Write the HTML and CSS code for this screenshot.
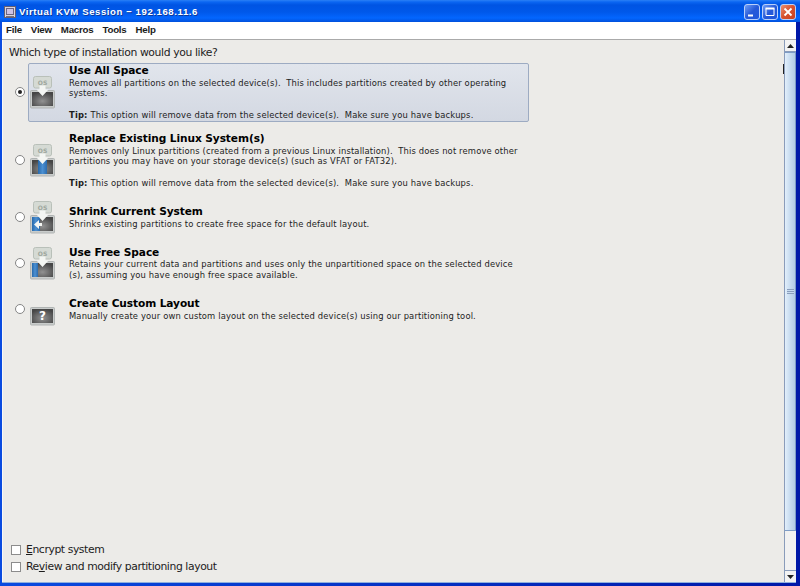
FILE: index.html
```html
<!DOCTYPE html>
<html lang="en">

<head>
    <meta charset="utf-8">
    <title>Virtual KVM Session - 192.168.11.6</title>
    <link rel="stylesheet" href="styles.css">
</head>

<body>
    <!-- shared icon pieces -->
    <svg class="defs" width="0" height="0">
        <defs>
            <radialGradient id="metal" cx="50%" cy="65%" r="65%">
                <stop offset="0" stop-color="#929292" />
                <stop offset="1" stop-color="#464646" />
            </radialGradient>
            <linearGradient id="blue" x1="0" y1="0" x2="1" y2="0">
                <stop offset="0" stop-color="#2769ab" />
                <stop offset="0.5" stop-color="#4c90d2" />
                <stop offset="1" stop-color="#2c6cae" />
            </linearGradient>
            <g id="disk">
                <rect x="0.5" y="14.5" width="24" height="17.5" rx="1" fill="#c9cccb" stroke="#b0b4b3" />
                <rect x="2" y="16" width="21" height="14" fill="url(#metal)" />
            </g>
            <g id="os">
                <rect x="3.5" y="0.5" width="18" height="11.5" rx="2" fill="#d5dad4" stroke="#b9c0b9" />
                <path d="M9.5 9.500h6v4h3l-6 6.500l-6-6.500h3z" fill="#f4f6f3" />
                <text x="12.5" y="8.5" class="os-text">OS</text>
            </g>
        </defs>
    </svg>

    <div class="window">
        <div class="titlebar">
            <svg class="app-icon" width="12" height="12" viewBox="0 0 12 12">
                <rect x="0.5" y="0.5" width="11" height="11" fill="#d9d5dc" stroke="#655f72" />
                <rect x="2.5" y="2.5" width="7" height="6" fill="#cbc3e6" stroke="#6d6684" />
                <path d="M2 10.500h8" stroke="#77717e" />
            </svg>
            <span class="title">Virtual KVM Session − 192.168.11.6</span>
            <div class="buttons">
                <span class="win-btn"><svg width="16" height="16"><path d="M4 11.500h5" stroke="#fff" stroke-width="2" /></svg></span>
                <span class="win-btn"><svg width="16" height="16"><path d="M4 4.500h8v7h-8z" fill="none" stroke="#fff" /><path d="M3.500 4.500h9" stroke="#fff" stroke-width="2" /></svg></span>
                <span class="win-btn close"><svg width="16" height="16"><path d="M4.500 4.500l7 7M11.500 4.500l-7 7" stroke="#fff" stroke-width="1.800" /></svg></span>
            </div>
        </div>

        <div class="menubar">
            <span>File</span>
            <span>View</span>
            <span>Macros</span>
            <span>Tools</span>
            <span>Help</span>
        </div>

        <div class="main">
            <div class="screen">
                <p class="question">Which type of installation would you like?</p>

                <div class="options">
                    <div class="option tall">
                        <span class="radio checked"></span>
                        <div class="card selected">
                            <svg class="icon" width="25" height="33"><use href="#disk" /><use href="#os" /></svg>
                            <div class="text">
                                <h2>Use All Space</h2>
                                <p>Removes all partitions on the selected device(s).&nbsp; This includes partitions created by other operating<br>systems.</p>
                                <p class="tip"><b>Tip:</b> This option will remove data from the selected device(s).&nbsp; Make sure you have backups.</p>
                            </div>
                        </div>
                    </div>
                    <div class="option tall">
                        <span class="radio"></span>
                        <div class="card">
                            <svg class="icon" width="25" height="33"><use href="#disk" /><rect x="8" y="16" width="9" height="14" fill="url(#blue)" /><use href="#os" /></svg>
                            <div class="text">
                                <h2>Replace Existing Linux System(s)</h2>
                                <p>Removes only Linux partitions (created from a previous Linux installation).&nbsp; This does not remove other<br>partitions you may have on your storage device(s) (such as VFAT or FAT32).</p>
                                <p class="tip"><b>Tip:</b> This option will remove data from the selected device(s).&nbsp; Make sure you have backups.</p>
                            </div>
                        </div>
                    </div>
                    <div class="option">
                        <span class="radio"></span>
                        <div class="card">
                            <svg class="icon" width="25" height="33"><use href="#disk" /><rect x="2" y="16" width="8" height="14" fill="url(#blue)" /><use href="#os" /><path d="M4 23.500l5-4.500v3h3v3h-3v3z" fill="#f4f6f3" /></svg>
                            <div class="text">
                                <h2>Shrink Current System</h2>
                                <p>Shrinks existing partitions to create free space for the default layout.</p>
                            </div>
                        </div>
                    </div>
                    <div class="option">
                        <span class="radio"></span>
                        <div class="card">
                            <svg class="icon" width="25" height="33"><use href="#disk" /><rect x="2" y="16" width="6" height="14" fill="url(#blue)" /><use href="#os" /></svg>
                            <div class="text">
                                <h2>Use Free Space</h2>
                                <p>Retains your current data and partitions and uses only the unpartitioned space on the selected device<br>(s), assuming you have enough free space available.</p>
                            </div>
                        </div>
                    </div>
                    <div class="option">
                        <span class="radio"></span>
                        <div class="card">
                            <svg class="icon" width="25" height="33"><use href="#disk" /><text x="12.500" y="27" class="mark">?</text></svg>
                            <div class="text">
                                <h2>Create Custom Layout</h2>
                                <p>Manually create your own custom layout on the selected device(s) using our partitioning tool.</p>
                            </div>
                        </div>
                    </div>
                </div>

                <div class="checks">
                    <div class="check"><span class="box"></span><span><u>E</u>ncrypt system</span></div>
                    <div class="check"><span class="box"></span><span>Re<u>v</u>iew and modify partitioning layout</span></div>
                </div>
                <span class="cursor"></span>
            </div>

            <div class="scrollbar">
                <span class="arrow"><svg width="7" height="4"><path d="M0 4L3.500 0L7 4z" fill="#222" /></svg></span>
                <span class="thumb"><i class="grip"></i></span>
                <span class="track"></span>
                <span class="arrow down"><svg width="7" height="4"><path d="M0 0L3.500 4L7 0z" fill="#222" /></svg></span>
            </div>
        </div>
    </div>
</body>

</html>
```
FILE: styles.css
```css
* {
    box-sizing: border-box;
}

body {
    margin: 0;
    overflow: hidden;
    font-family: "DejaVu Sans", sans-serif;
    color: #1c1c1c;
}

h2,
p {
    margin: 0;
}

.defs {
    position: absolute;
}

.window {
    display: flex;
    flex-direction: column;
    width: 800px;
    height: 586px;
    padding: 0 4px 3px 2px;
    background: linear-gradient(to right, #0a4be0 0, #0a4be0 3px, #0018a8 100%);
}

.titlebar {
    display: flex;
    align-items: center;
    height: 22px;
    margin: 0 -4px 0 -2px;
    padding: 2px 4px 0 4px;
    background: linear-gradient(#2b80f5 0, #0b66f2 2px, #0054e3 5px, #0058ea 12px, #0366ff 18px, #0050dc 22px);
    color: #fff;
}

.title {
    margin-left: 3px;
    font: bold 9.6px/14px "Liberation Sans", Arial, sans-serif;
    letter-spacing: 0.57px;
    white-space: nowrap;
    text-shadow: 1px 1px 0 #0c3a9c;
}

.buttons {
    display: flex;
    gap: 2px;
    margin-left: auto;
}

.win-btn {
    width: 16px;
    height: 16px;
    border: 1px solid #b9d0fa;
    border-radius: 3px;
    background: linear-gradient(135deg, #6f9df5, #2559d8 50%, #2057dc);
}

.win-btn svg {
    display: block;
    margin: -1px;
}

.close {
    background: linear-gradient(135deg, #ec9172, #d6502d 50%, #c94120);
}

.menubar {
    display: flex;
    height: 18px;
    padding-left: 4px;
    gap: 9px;
    background: #fff;
    border-bottom: 1px solid #aaa;
    font: bold 9.7px/16px "Liberation Sans", Arial, sans-serif;
    letter-spacing: -0.22px;
}

.main {
    display: flex;
    flex: 1;
    min-height: 0;
    border-bottom: 1px solid #8fb0de;
    background: #ecebe8;
}

.screen {
    position: relative;
    display: flex;
    flex: 1;
    flex-direction: column;
    padding: 5px 0 7px 6px;
    border-left: 1px solid #f8f8f8;
}

.question {
    font-size: 10.8px;
    line-height: 15px;
    letter-spacing: -0.38px;
    white-space: nowrap;
}

.options {
    display: flex;
    flex-direction: column;
    gap: 9px;
    padding: 3px 0 0 6px;
}

.option {
    display: flex;
    align-items: center;
    gap: 3px;
    height: 37px;
}

.tall {
    height: 59px;
}

.radio {
    display: flex;
    align-items: center;
    justify-content: center;
    width: 10px;
    height: 10px;
    margin-bottom: 2px;
    border: 1px solid #858585;
    border-radius: 50%;
    background: #fff;
}

.checked::after {
    content: "";
    width: 4px;
    height: 4px;
    border-radius: 50%;
    background: #222;
}

.card {
    display: flex;
    align-items: center;
    width: 501px;
    height: 100%;
    padding-left: 1px;
    border: 1px solid transparent;
    border-radius: 2px;
}

.selected {
    border-color: #9dabc2;
    background: linear-gradient(#e1e5ec, #d3d8e2);
}

.text {
    margin: 0 0 1.4px 14px;
    white-space: nowrap;
}

.text h2 {
    font-size: 10.6px;
    line-height: 14.4px;
    letter-spacing: -0.09px;
    color: #000;
}

.text p {
    font-size: 8.4px;
    line-height: 10.6px;
    letter-spacing: 0.145px;
}

.text .tip {
    margin-top: 10.6px;
    letter-spacing: 0.17px;
}

.os-text {
    font: bold 6px "DejaVu Sans", sans-serif;
    text-anchor: middle;
    fill: #9ea79e;
}

.mark {
    font: bold 12px "DejaVu Sans", sans-serif;
    text-anchor: middle;
    fill: #fff;
}

.checks {
    margin-top: auto;
    font-size: 10.8px;
    line-height: 17px;
    letter-spacing: -0.41px;
}

.check {
    display: flex;
    align-items: center;
    gap: 5px;
    padding-left: 2px;
}

.box {
    width: 10px;
    height: 10px;
    border: 1px solid #8c8c8c;
    background: #fff;
}

.cursor {
    position: absolute;
    top: 24px;
    right: 0;
    width: 1px;
    height: 10px;
    background: #222;
}

.scrollbar {
    display: flex;
    flex-direction: column;
    width: 12px;
    border-left: 1px solid #8a9cba;
    background: #f1f1f1;
}

.arrow {
    display: flex;
    align-items: center;
    justify-content: center;
    height: 12px;
    border-bottom: 1px solid #8a9cba;
    background: #f3f3f3;
}

.thumb {
    display: flex;
    align-items: center;
    justify-content: center;
    height: 479px;
    border: 1px solid #7d9cc6;
    border-left: 0;
    background: linear-gradient(to right, #e2effb, #c8dcf0 50%, #b2cbe6);
}

.grip {
    width: 7px;
    height: 5px;
    background: repeating-linear-gradient(#8a9ebd 0, #8a9ebd 1px, #c8dcf0 1px, #c8dcf0 2px);
}

.track {
    flex: 1;
}

.down {
    border-top: 1px solid #8a9cba;
    border-bottom: 0;
}
```
